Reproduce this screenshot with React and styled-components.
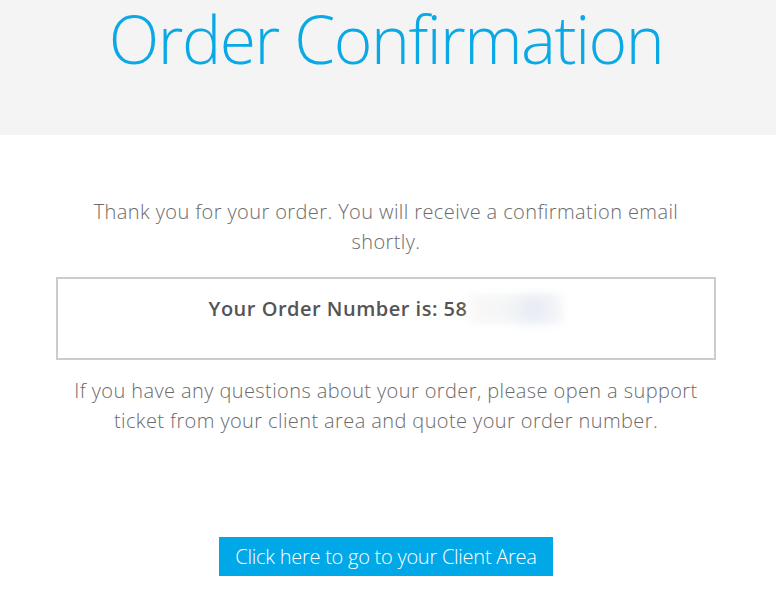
import React from "react";
import styled, { createGlobalStyle } from "styled-components";

const GlobalStyle = createGlobalStyle`
  html, body {
    margin: 0;
    padding: 0;
    background: #ffffff;
    font-family: "Open Sans", "Liberation Sans", sans-serif;
  }
`;

const Header = styled.header`
  height: 135px;
  background: #f4f4f4;
  display: flex;
  justify-content: center;
  box-sizing: border-box;
  padding-top: 5px;
  padding-right: 4px;
`;

const Title = styled.h1`
  margin: 0;
  font-size: 66px;
  font-weight: 300;
  line-height: 1;
  letter-spacing: -1.5px;
  color: #0aa9e6;
`;

const Main = styled.main`
  width: 660px;
  margin: 0 0 0 calc(50% - 332px);
  padding-top: 62px;
  display: flex;
  flex-direction: column;
  align-items: center;
`;

const Text = styled.p`
  margin: 0;
  font-size: 20px;
  font-weight: 300;
  line-height: 30px;
  letter-spacing: 0.4px;
  color: #6b6b6b;
  text-align: center;
  max-width: ${(p) => p.$max || "660px"};
`;

const OrderBox = styled.div`
  width: 100%;
  box-sizing: border-box;
  margin: 20px 0 16px;
  padding: 15px 15px 34px;
  border: 2px solid #cccccc;
  text-align: center;
  font-size: 20px;
  font-weight: 600;
  line-height: 30px;
  letter-spacing: 0.5px;
  color: #555;
`;

const Hidden = styled.span`
  display: inline-block;
  width: 94px;
  height: 30px;
  vertical-align: top;
  margin-left: 2px;
  background: linear-gradient(90deg, #faf6f7 0%, #f1f5f5 40%, #e2e7f1 70%, #f5f5f6 100%);
  filter: blur(4px);
  opacity: 0.8;
`;

const Button = styled.a`
  margin-top: 101px;
  display: inline-block;
  padding: 0 16px;
  height: 39px;
  line-height: 39px;
  background: #00a8e8;
  color: #fff;
  font-size: 20px;
  font-weight: 300;
  letter-spacing: -0.25px;
  text-decoration: none;
`;

export default function App() {
  return (
    <>
      <GlobalStyle />
      <Header>
        <Title>Order Confirmation</Title>
      </Header>
      <Main>
        <Text $max="600px">
          Thank you for your order. You will receive a confirmation email shortly.
        </Text>
        <OrderBox>
          Your Order Number is: 58<Hidden />
        </OrderBox>
        <Text>
          If you have any questions about your order, please open a support ticket from your client area and quote your order number.
        </Text>
        <Button href="#">Click here to go to your Client Area</Button>
      </Main>
    </>
  );
}
